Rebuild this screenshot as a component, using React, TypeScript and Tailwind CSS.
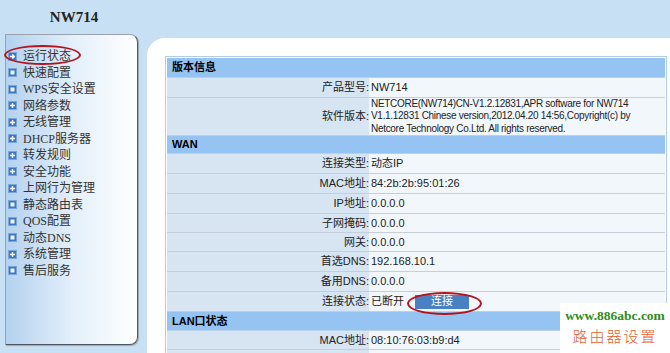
import React from 'react';

type MenuIcon = 'arrow' | 'leaf' | 'plus';

const menu: { name: string; icon: MenuIcon }[] = [
  { name: '运行状态', icon: 'arrow' },
  { name: '快速配置', icon: 'leaf' },
  { name: 'WPS安全设置', icon: 'leaf' },
  { name: '网络参数', icon: 'plus' },
  { name: '无线管理', icon: 'plus' },
  { name: 'DHCP服务器', icon: 'plus' },
  { name: '转发规则', icon: 'plus' },
  { name: '安全功能', icon: 'plus' },
  { name: '上网行为管理', icon: 'plus' },
  { name: '静态路由表', icon: 'leaf' },
  { name: 'QOS配置', icon: 'leaf' },
  { name: '动态DNS', icon: 'leaf' },
  { name: '系统管理', icon: 'plus' },
  { name: '售后服务', icon: 'leaf' },
];

const NavIcon = ({ type }: { type: MenuIcon }) => (
  <svg width="9" height="9" viewBox="0 0 9 9" className="shrink-0">
    <rect x="0" y="0" width="9" height="9" fill="#3a78c6" />
    <rect x="0.5" y="0.5" width="8" height="8" fill="none" stroke="#7aa6dc" strokeWidth="1" />
    {type === 'leaf' && <rect x="2.5" y="2.5" width="4" height="4" fill="#eef4fc" />}
    {type === 'plus' && (
      <path d="M4.5 2v5M2 4.5h5" stroke="#ffffff" strokeWidth="1.4" />
    )}
    {type === 'arrow' && (
      <path d="M1.8 4.5h4.4M4.3 2.4l2.1 2.1-2.1 2.1" stroke="#ffffff" strokeWidth="1.4" fill="none" />
    )}
  </svg>
);

const SectionHeader = ({ children, h = 'h-[20px]' }: { children: React.ReactNode; h?: string }) => (
  <div className={`${h} flex items-center bg-[#95c4f2] border-b border-[#b9d2ea] pl-[5px] text-[11px] font-bold text-black`}>
    {children}
  </div>
);

const Row = ({ label, children, h = 'h-[20px]' }: { label: string; children?: React.ReactNode; h?: string }) => (
  <div className={`${h} flex border-b border-[#c6cfd9]`}>
    <div className="w-[202px] shrink-0 bg-[#d7e4f2] flex items-center justify-end text-[#222]">
      {label && `${label}:`}
    </div>
    <div className="flex-1 bg-[#f2f7fc] flex items-center pl-[2px] text-[#222]">{children}</div>
  </div>
);

export default function App() {
  return (
    <div className="relative w-[670px] h-[353px] overflow-hidden bg-[#c8e0f4] flex font-['Liberation_Sans','Noto_Sans_CJK_SC',sans-serif]">
      {/* left column */}
      <div className="w-[147px] shrink-0 flex flex-col">
        <div className="h-[34px] flex items-center justify-center font-['Liberation_Serif',serif] font-bold text-[15px] text-[#222] pl-[1px]">
          NW714
        </div>
        <div className="ml-[5px] w-[133px] h-[311px] bg-gradient-to-r from-[#b3d1ee] via-[#e3effa] to-white border border-[#9aa3ad] border-r-[#50565d] border-b-[#50565d] rounded-tr-[8px] rounded-br-[8px] shadow-[1px_1px_1px_rgba(0,0,0,0.25)] pt-[13px]">
          {menu.map((m) => (
            <div
              key={m.name}
              className="h-[16.5px] flex items-center gap-[6px] pl-[2px] text-[12px] text-[#333] font-['Liberation_Serif','Noto_Sans_CJK_SC',serif] leading-none"
            >
              <NavIcon type={m.icon} />
              <span>{m.name}</span>
            </div>
          ))}
        </div>
      </div>

      {/* content panel */}
      <div className="flex-1 mt-[38px] bg-white rounded-tl-[18px] pl-[18px] pt-[18px]">
        <div className="w-[502px] border border-[#b3cde8] p-px text-[11px]">
          <SectionHeader>版本信息</SectionHeader>
          <Row label="产品型号">NW714</Row>
          <Row label="软件版本" h="h-[38px]">
            <div className="leading-[12.5px] text-[10px] tracking-[-0.3px]">
              NETCORE(NW714)CN-V1.2.12831,APR software for NW714
              <br />
              V1.1.12831 Chinese version,2012.04.20 14:56,Copyright(c) by
              <br />
              Netcore Technology Co.Ltd. All rights reserved.
            </div>
          </Row>
          <SectionHeader h="h-[18px]">WAN</SectionHeader>
          <Row label="连接类型">动态IP</Row>
          <Row label="MAC地址">84:2b:2b:95:01:26</Row>
          <Row label="IP地址">0.0.0.0</Row>
          <Row label="子网掩码" h="h-[19px]">0.0.0.0</Row>
          <Row label="网关" h="h-[19px]">0.0.0.0</Row>
          <Row label="首选DNS">192.168.10.1</Row>
          <Row label="备用DNS">0.0.0.0</Row>
          <Row label="连接状态">
            <span>已断开</span>
            <button className="ml-[11px] w-[54px] h-[14px] bg-[#4880c2] text-white text-[11px] leading-none flex items-center justify-center">
              连接
            </button>
          </Row>
          <SectionHeader h="h-[19px]">LAN口状态</SectionHeader>
          <Row label="MAC地址" h="h-[19px]">08:10:76:03:b9:d4</Row>
          <Row label="" />
        </div>
      </div>

      {/* red markers */}
      <div className="absolute left-[4px] top-[45px] w-[77px] h-[20px] rounded-[50%] border-2 border-[#b3141f]" />
      <div className="absolute left-[407px] top-[292px] w-[75px] h-[23px] rounded-[50%] border-[2.5px] border-[#b3141f]" />

      {/* watermark */}
      <div className="absolute left-[560px] top-[303px] w-[110px] h-[50px] bg-white flex flex-col items-center pt-[5px]">
        <div className="font-['Liberation_Serif',serif] font-bold text-[13.5px] leading-[16px] text-[#2f8a1c]">
          www.886abc.com
        </div>
        <div className="mt-[3px] font-['Noto_Sans_CJK_SC',sans-serif] font-light text-[15px] leading-[18px] tracking-[2px] text-[#e5602a]">
          路由器设置
        </div>
      </div>
    </div>
  );
}
